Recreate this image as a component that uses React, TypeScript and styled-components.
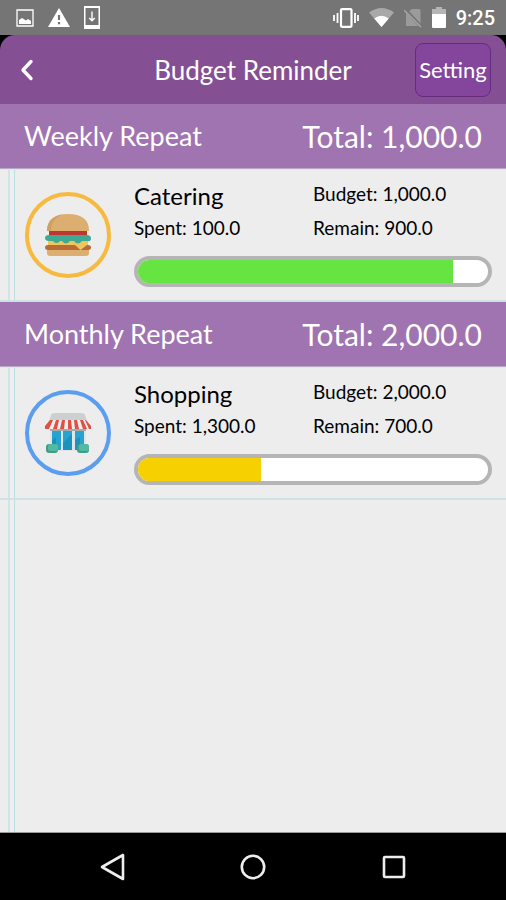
import React from "react";
import styled, { createGlobalStyle } from "styled-components";

const GlobalStyle = createGlobalStyle`
  * { box-sizing: border-box; }
  body { margin: 0; background: #000; font-family: Lato, "Open Sans", sans-serif; }
  h1, h2, h3, p { margin: 0; font-weight: 400; }
`;

const Screen = styled.div`
  display: flex;
  flex-direction: column;
  min-height: 100vh;
  background: #000;
`;

const StatusBar = styled.div`
  display: flex;
  align-items: center;
  justify-content: space-between;
  height: 35px;
  padding: 0 11px 0 16px;
  background: #757575;
  color: #fff;
`;

const StatusGroup = styled.div<{ $gap: number }>`
  display: flex;
  align-items: center;
  gap: ${(p) => p.$gap}px;
`;

const Clock = styled.span`
  font: 500 20px/24px Roboto, sans-serif;
`;

const Header = styled.header`
  display: grid;
  grid-template-columns: 76px 1fr 76px;
  align-items: center;
  height: 69px;
  padding: 0 15px;
  border-radius: 15px 15px 0 0;
  background: #845093;
  color: #fff;
`;

const BackButton = styled.button`
  justify-self: start;
  display: flex;
  padding: 0;
  border: 0;
  background: none;
  color: inherit;
`;

const Title = styled.h1`
  font-size: 26px;
  line-height: 32px;
  text-align: center;
  white-space: nowrap;
`;

const SettingButton = styled.button`
  height: 54px;
  padding: 0;
  border: 1px solid #652b80;
  border-radius: 8px;
  background: #84469c;
  color: #fff;
  font: 400 22px/28px Lato, sans-serif;
`;

const Content = styled.main`
  flex: 1;
  border-bottom: 1px solid #999;
  background:
    linear-gradient(90deg, transparent 8px, #d2e4e4 8px, #d2e4e4 10px, #efefef 10px, #efefef 14px, #bbdedf 14px, #bbdedf 15px, transparent 15px)
    #ededed;
`;

const GroupHeader = styled.div`
  display: flex;
  align-items: center;
  justify-content: space-between;
  height: 65px;
  padding: 0 24px;
  border-bottom: 1px solid #b7aac5;
  background: #a073b1;
  color: #fff;
`;

const GroupTitle = styled.h2`
  font-size: 27px;
  line-height: 32px;
`;

const GroupTotal = styled.p`
  font-size: 30px;
  line-height: 32px;
`;

const BudgetRow = styled.article`
  display: grid;
  grid-template-columns: 86px 1fr;
  align-items: center;
  column-gap: 23px;
  height: 133px;
  padding: 0 14px 0 25px;
  border-top: 1px solid #dde9e9;
  border-bottom: 2px solid #cfe2e3;
`;

const Badge = styled.div<{ $color: string }>`
  display: grid;
  place-items: center;
  height: 86px;
  border: 4px solid ${(p) => p.$color};
  border-radius: 50%;
`;

const Details = styled.div`
  display: grid;
  grid-template-columns: 1fr 1fr;
  row-gap: 2px;
  padding-bottom: 4px;
`;

const Name = styled.h3`
  font-size: 24px;
  line-height: 32px;
`;

const Figure = styled.p`
  font-size: 19px;
  line-height: 28px;
`;

const Track = styled.div`
  grid-column: 1 / -1;
  height: 31px;
  margin-top: 12px;
  overflow: hidden;
  border: 4px solid #b5b5b5;
  border-radius: 16px;
  background: #fff;
`;

const Fill = styled.div<{ $color: string }>`
  height: 100%;
  background: ${(p) => p.$color};
`;

const NavBar = styled.nav`
  display: flex;
  align-items: center;
  justify-content: space-between;
  height: 67px;
  padding: 0 98px;
  background: #000;
`;

const NavButton = styled.button`
  display: flex;
  padding: 0;
  border: 0;
  background: none;
`;

const PictureIcon = () => (
  <svg width="18" height="18" viewBox="0 0 18 18">
    <path d="M1 1h16v16H1z" fill="none" stroke="#fff" strokeWidth="1.3" />
    <path d="M3 15v-4l3-2 4 2.500 2-1.500 3 2v3z" fill="#fff" />
  </svg>
);

const WarningIcon = () => (
  <svg width="22" height="20" viewBox="0 0 22 20">
    <path d="M11 0l11 19H0z" fill="#fff" />
    <path d="M11 7v5M11 14v2.300" stroke="#757575" strokeWidth="2.200" />
  </svg>
);

const DownloadIcon = () => (
  <svg width="16" height="23" viewBox="0 0 16 23">
    <path fillRule="evenodd" d="M0 0h16v23H0zM1.500 2v17h13V2z" fill="#fff" />
    <path d="M8 5.500v9M5.200 12L8 14.800l2.800-2.800" fill="none" stroke="#fff" strokeWidth="1.400" />
  </svg>
);

const VibrateIcon = () => (
  <svg width="26" height="20" viewBox="0 0 26 20" fill="none" stroke="#fff">
    <rect x="8" y="1.200" width="10.500" height="17.600" rx="1" strokeWidth="2.200" />
    <path d="M4.500 5v10M22 5v10M1 7v6M25 7v6" strokeWidth="1.800" />
  </svg>
);

const WifiIcon = () => (
  <svg width="25" height="19" viewBox="0 0 25 19">
    <path d="M0 4.500Q12.500-4.500 25 4.500L12.500 19z" fill="#a9a9a9" />
    <path d="M5.200 10.500Q12.500 5 19.800 10.500L12.500 19z" fill="#fff" />
  </svg>
);

const NoSimIcon = () => (
  <svg width="18" height="20" viewBox="0 0 18 20">
    <path d="M2 6l6-5h7q1.500 0 1.500 1.500V18H2z" fill="#9b9b9b" />
    <path d="M1 1.500l17 18" stroke="#757575" strokeWidth="3.500" />
    <path d="M0 2l17 17" stroke="#a3a3a3" strokeWidth="1.600" />
  </svg>
);

const BatteryIcon = () => (
  <svg width="14" height="21" viewBox="0 0 14 21">
    <path d="M0 2h4V0h6v2h4v6H0z" fill="#b5b5b5" />
    <path d="M0 7h14v13q0 1-1 1H1q-1 0-1-1z" fill="#fff" />
  </svg>
);

const ChevronIcon = () => (
  <svg width="24" height="24" viewBox="0 0 24 24">
    <path d="M16 3.500L8 12l8 8.500" fill="none" stroke="#fff" strokeWidth="3.400" strokeLinecap="round" strokeLinejoin="round" />
  </svg>
);

const BurgerIcon = () => (
  <svg width="46" height="44" viewBox="0 0 46 44">
    <path d="M2 18Q2 1 23 1t21 17H2z" fill="#dcae70" />
    <path d="M2 18C2 9 8 3 17 1.500C9 6 6 10 6 18z" fill="#cda063" />
    <path d="M4 18h38v5H4z" fill="#bd3730" />
    <path d="M3 25h40v8H3z" fill="#efc65e" />
    <path d="M4 22h38q4 0 4 3.500T42 28h-5q-2 2.500-4 2.500T29 28h-4q-2 2.500-4 2.500T17 28h-2q-1 2-3.500 2T8 28H4q-4 0-4-3t4-3z" fill="#3eaa94" />
    <path d="M3 32h40q3 0 3 2.500T43 37H3q-3 0-3-2.500T3 32z" fill="#b96a35" />
    <path d="M30 32h12l-6.500 5z" fill="#efc65e" />
    <path d="M2 37h42v3q0 3-3 3H5q-3 0-3-3z" fill="#dcae70" />
  </svg>
);

const ShopIcon = () => (
  <svg width="46" height="42" viewBox="0 0 46 42">
    <path d="M5 9h36v30H5z" fill="#e2e4e5" />
    <path d="M4 9l2-6q1-2 3-2h28q2 0 3 2l2 6z" fill="#cbd0d1" />
    <path d="M7 18h9v20H7zM18 18h9v20h-9zM30 18h9v20h-9z" fill="#25a4d0" />
    <path d="M7 28l4-3v13H7zM18 31l9-9v16h-9zM30 28l5-3v13h-5z" fill="#1b91be" />
    <path d="M5 16h36v3H5z" fill="#a9a9a9" />
    <path d="M5 8h36l5 6v2q0 1-2 1H2q-2 0-2-1v-2z" fill="#eef0f0" />
    <path d="M5 8h3l-4 9H0v-3zM11 8h3l-2 9H8zM17 8h3l-1 9h-4zM23 8h3l1 9h-4zM29 8h3l2 9h-4zM35 8h3l4 9h-4zM40 8h1l5 6v3h-2z" fill="#de5145" />
    <rect x="1" y="32" width="12" height="9" rx="3" fill="#3f9f86" />
    <rect x="32" y="32" width="12" height="9" rx="3" fill="#3f9f86" />
    <rect x="3" y="32" width="10" height="7" rx="2.500" fill="#54b9a0" />
    <rect x="34" y="32" width="10" height="7" rx="2.500" fill="#54b9a0" />
  </svg>
);

const groups = [
  {
    title: "Weekly Repeat", total: "1,000.0", name: "Catering", budget: "1,000.0", spent: "100.0",
    remain: "900.0", percent: 90, color: "#66e442", ring: "#f7b93e", icon: <BurgerIcon />,
  },
  {
    title: "Monthly Repeat", total: "2,000.0", name: "Shopping", budget: "2,000.0", spent: "1,300.0",
    remain: "700.0", percent: 35, color: "#f6d000", ring: "#5b9dee", icon: <ShopIcon />,
  },
];

export default function App() {
  return (
    <Screen>
      <GlobalStyle />
      <StatusBar>
        <StatusGroup $gap={14}>
          <PictureIcon />
          <WarningIcon />
          <DownloadIcon />
        </StatusGroup>
        <StatusGroup $gap={10}>
          <VibrateIcon />
          <WifiIcon />
          <NoSimIcon />
          <BatteryIcon />
          <Clock>9:25</Clock>
        </StatusGroup>
      </StatusBar>
      <Header>
        <BackButton aria-label="Back"><ChevronIcon /></BackButton>
        <Title>Budget Reminder</Title>
        <SettingButton>Setting</SettingButton>
      </Header>
      <Content>
        {groups.map((g) => (
          <section key={g.title}>
            <GroupHeader>
              <GroupTitle>{g.title}</GroupTitle>
              <GroupTotal>Total: {g.total}</GroupTotal>
            </GroupHeader>
            <BudgetRow>
              <Badge $color={g.ring}>{g.icon}</Badge>
              <Details>
                <Name>{g.name}</Name>
                <Figure>Budget: {g.budget}</Figure>
                <Figure>Spent: {g.spent}</Figure>
                <Figure>Remain: {g.remain}</Figure>
                <Track role="progressbar" aria-label={`${g.name} remaining`} aria-valuenow={g.percent} aria-valuemin={0} aria-valuemax={100}>
                  <Fill $color={g.color} style={{ width: `${g.percent}%` }} />
                </Track>
              </Details>
            </BudgetRow>
          </section>
        ))}
      </Content>
      <NavBar>
        <NavButton aria-label="Back">
          <svg width="28" height="30" viewBox="0 0 28 30">
            <path d="M4 15L25 3v24z" fill="none" stroke="#eee" strokeWidth="2.600" strokeLinejoin="round" />
          </svg>
        </NavButton>
        <NavButton aria-label="Home">
          <svg width="28" height="28" viewBox="0 0 28 28">
            <circle cx="14" cy="14" r="11.200" fill="none" stroke="#eee" strokeWidth="2.600" />
          </svg>
        </NavButton>
        <NavButton aria-label="Recent apps">
          <svg width="28" height="28" viewBox="0 0 28 28">
            <rect x="4" y="4" width="20" height="20" rx="1" fill="none" stroke="#eee" strokeWidth="2.600" />
          </svg>
        </NavButton>
      </NavBar>
    </Screen>
  );
}
